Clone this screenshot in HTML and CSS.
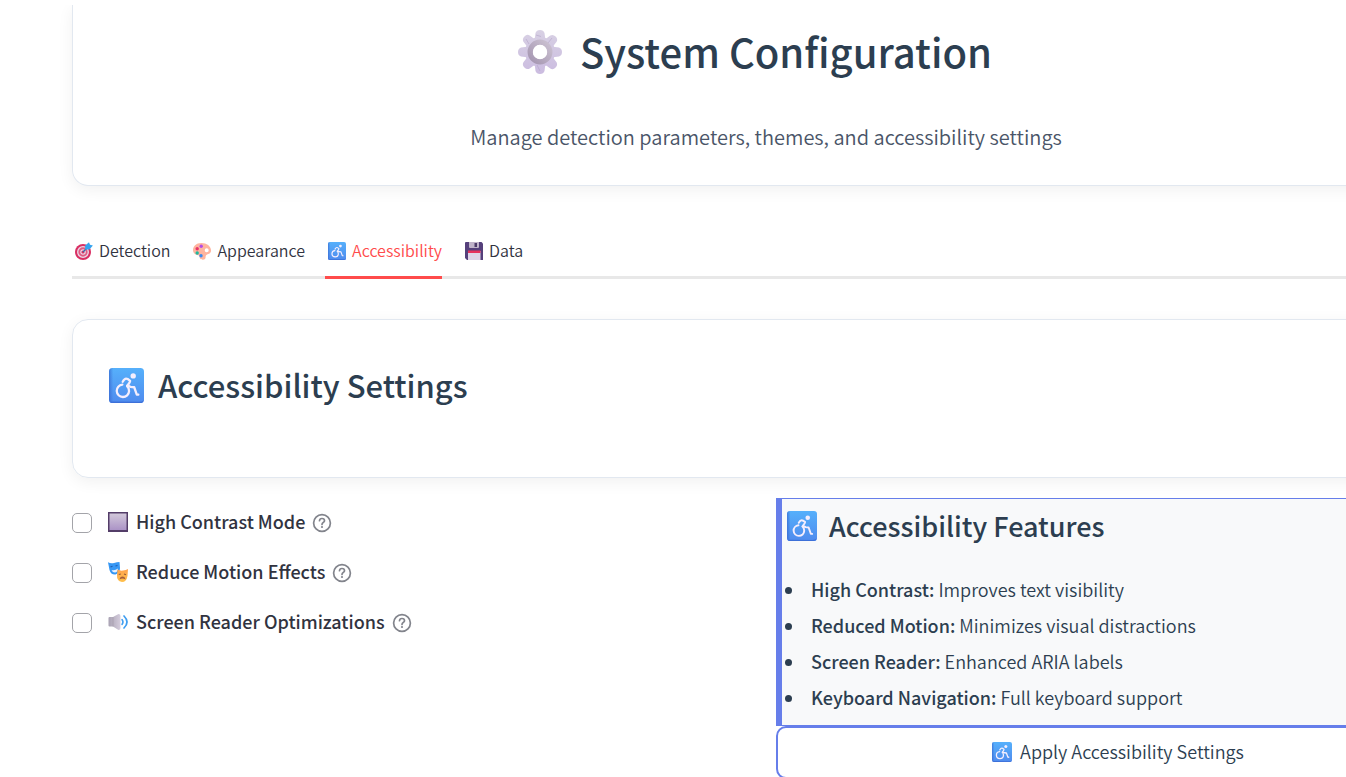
FILE: index.html
```html
<!DOCTYPE html>
<html lang="en">
<head>
<meta charset="utf-8">
<title>System Configuration</title>
<link rel="stylesheet" href="styles.css">
</head>
<body>
<svg class="defs" aria-hidden="true">
  <defs>
    <linearGradient id="blue" x1="0" y1="0" x2="0" y2="1"><stop offset="0" stop-color="#56b0fb"/><stop offset="1" stop-color="#4f8bee"/></linearGradient>
    <linearGradient id="blue-side" x1="0" y1="0" x2="1" y2="0"><stop offset="0" stop-color="#3566cf" stop-opacity=".7"/><stop offset="1" stop-color="#3566cf" stop-opacity="0"/></linearGradient>
    <linearGradient id="gear-fill" gradientUnits="userSpaceOnUse" x1="0" y1="0" x2="0" y2="44"><stop offset="0" stop-color="#d8d1e4"/><stop offset="1" stop-color="#cbbce0"/></linearGradient>
    <linearGradient id="hub" x1="1" y1="0" x2="0" y2="1"><stop offset="0" stop-color="#cbc1d1"/><stop offset="1" stop-color="#a596b1"/></linearGradient>
    <linearGradient id="square-fill" x1="0" y1="0" x2="0" y2="1"><stop offset="0" stop-color="#d2c8da"/><stop offset="1" stop-color="#ab93c6"/></linearGradient>
    <linearGradient id="orange" x1="0" y1="0" x2="0" y2="1"><stop offset="0" stop-color="#ffa24f"/><stop offset="1" stop-color="#ffc04a"/></linearGradient>
    <linearGradient id="cone" x1="0" y1="0" x2="1" y2="0"><stop offset="0" stop-color="#a9a2b3"/><stop offset="1" stop-color="#d5cddd"/></linearGradient>
    <symbol id="access" viewBox="0 0 34 34">
      <rect width="34" height="34" rx="3.500" fill="url(#blue)"/>
      <path d="M3.500 0H4v34H3.500A3.500 3.500 0 0 1 0 30.500V3.500A3.500 3.500 0 0 1 3.500 0Z" fill="url(#blue-side)"/>
      <path d="M1 32.500Q2 34 4 34H30Q33 34 34 31Q32 32.800 29 32.800Z" fill="#3d70d8"/>
      <circle cx="23.500" cy="7.700" r="2.600" fill="#f5eefd"/>
      <g fill="none" stroke="#f5eefd" stroke-width="2.200" stroke-linecap="round" stroke-linejoin="round">
        <path d="M13.300 13.400Q15 10.400 16.600 10.400T20.500 12.500Q20.700 13.500 17.600 17.300 19.600 17.300 21 18.300L24.500 18.700 27 25.800 28.500 25.900"/>
        <path d="M13 16.200A6 6 0 1 0 19.500 22.500Q19.500 19.500 17.600 17.600"/>
      </g>
    </symbol>
    <symbol id="gear" viewBox="0 0 44 44">
      <g fill="url(#gear-fill)">
        <circle cx="22" cy="22" r="15"/>
        <path d="M16.500 11 17.500 3Q18.500 0 22 0T26.500 3L27.500 11ZM16.500 33 17.500 41Q18.500 44 22 44T26.500 41L27.500 33Z"/>
        <path d="M11 16.500 3 17.500Q0 18.500 0 22T3 26.500L11 27.500ZM33 16.500 41 17.500Q44 18.500 44 22T41 26.500L33 27.500Z"/>
        <path d="M10.300 18.100 5.400 11.700Q4 8.900 6.400 6.400T11.700 5.400L18.100 10.300ZM33.700 25.900 38.600 32.300Q40 35.100 37.600 37.600T32.300 38.600L25.900 33.700Z"/>
        <path d="M25.900 10.300 32.300 5.400Q35.100 4 37.600 6.400T38.600 11.700L33.700 18.100ZM18.100 33.700 11.700 38.600Q8.900 40 6.400 37.600T5.400 32.300L10.300 25.900Z"/>
      </g>
      <path d="m18 5 5 1.500M34 8l-4 5M19 35l3 6M8 9l3 5" stroke="#b4a5c7" stroke-width=".6"/>
      <circle cx="22" cy="22" r="9.700" fill="#fff" stroke="url(#hub)" stroke-width="5.500"/>
      <circle cx="22" cy="22" r="7.200" fill="#fff"/>
    </symbol>
    <symbol id="target" viewBox="0 0 18 18">
      <circle cx="8" cy="10" r="8" fill="#d92f63"/>
      <circle cx="8" cy="10" r="5.300" fill="#e05b82" stroke="#ead9e8" stroke-width="1.300"/>
      <circle cx="8" cy="10" r="2.200" fill="#d7315f" stroke="#ead9e8" stroke-width="1.200"/>
      <path d="m8 10 5-5" stroke="#3868a8" stroke-width="1.300"/>
      <path d="m10 7.500.2-4L14 .3l1 2.400 2.900.9L14.500 7.500Z" fill="#35a4ef"/>
    </symbol>
    <symbol id="palette" viewBox="0 0 18 18">
      <path fill-rule="evenodd" d="M8.500 1C3 1 0 4.500 0 8s3 5 5.500 5.300C7 13.600 6 15 7 16.500S11 18 12 17c1.200-1.200 0-3 1.300-4S18 12 18 8.500C18 4 13.500 1 8.500 1Zm5.200 5.300a2 2 0 1 1 0 4 2 2 0 0 1 0-4Z" fill="#feb49f"/>
      <circle cx="8.200" cy="4.200" r="1.700" fill="#b34be8"/><circle cx="4.200" cy="6.700" r="1.700" fill="#e93468"/><circle cx="4.200" cy="11" r="1.700" fill="#20b9a0"/><circle cx="8" cy="13.800" r="1.700" fill="#398aef"/>
    </symbol>
    <symbol id="floppy" viewBox="0 0 18 18">
      <path d="M1 0H16.500L18 1.500V18H2L0 16V1Q0 0 1 0Z" fill="#55407b"/>
      <path d="M4 0H14V5Q14 6 13 6H5Q4 6 4 5Z" fill="#bfb3c9"/><path d="M9.500 1H12V5H9.500Z" fill="#4c3b68"/>
      <path d="M3 9H15.500V18H3Z" fill="#ded4e8"/><path d="M3 8.500H15.500V11H3Z" fill="#e6315e"/>
    </symbol>
    <symbol id="square" viewBox="0 0 20 20">
      <path d="M0 0H20V20H0Z" fill="#533d68"/><path d="M1.500 1.500H18.500V18H1.500Z" fill="url(#square-fill)"/>
    </symbol>
    <symbol id="masks" viewBox="0 0 20 20">
      <path d="M0 .3Q3 2 6 1T11.500 0L12 6Q12 11 7.500 12.500 3 13 1.500 8Z" fill="#3697f4"/>
      <path d="m2.500 5 2-.8M7.500 4l2-.5" stroke="#245cae" stroke-width="1.200"/><path d="M3.500 8Q7 9 10 6.500 9.500 10.500 7 10.500 4.500 10.500 3.500 8Z" fill="#e9f2ff"/>
      <path d="M9.500 7.500Q12 9 15 8.500T20 7L19.500 14Q18.500 20 14 20 8.500 19 9 13Z" fill="url(#orange)"/>
      <path d="m10.800 12.500 2-.5M16 12l2 .7" stroke="#965b35" stroke-width="1.200"/><path d="M11.500 17.500Q12 14.500 14.500 14.500T17.500 17.500Q14.500 15.500 11.500 17.500Z" fill="#a35b3c"/>
    </symbol>
    <symbol id="speaker" viewBox="0 0 20 20">
      <path d="M1.500 5H5L10.500 2Q12.500 2 12.500 4V16Q12.500 18 10.500 18L5 14.500H1.500Q.5 14.500 .5 13.500V6Q.5 5 1.500 5Z" fill="url(#cone)"/>
      <path d="M5 5V14.500" stroke="#a79faf" stroke-width=".8"/>
      <path d="M14 7.500Q16 10 14 12.500" fill="none" stroke="#3e9df0" stroke-width="1.500" stroke-linecap="round"/>
      <path d="M16 4Q22 10 16 16" fill="none" stroke="#3e9df0" stroke-width="1.700" stroke-linecap="round"/>
    </symbol>
    <symbol id="help" viewBox="0 0 20 20">
      <g fill="none" stroke="#82848c" stroke-width="1.700" stroke-linecap="round"><circle cx="10" cy="10" r="8.400"/><path d="M7.500 7.700C7.600 6.300 8.600 5.500 10 5.500s2.500.9 2.500 2.200C12.500 9.400 10 9.500 10 11.500"/></g><circle cx="10" cy="14" r="1.100" fill="#82848c"/>
    </symbol>
  </defs>
</svg>
<main class="viewport">
  <div class="content">
    <header class="hero">
      <h1 class="hero-title"><svg class="icon-hero" aria-hidden="true"><use href="#gear"/></svg>System Configuration</h1>
      <p class="hero-text">Manage detection parameters, themes, and accessibility settings</p>
    </header>
    <div class="tabs" role="tablist">
      <button class="tab" role="tab"><svg class="icon-tab" aria-hidden="true"><use href="#target"/></svg>Detection</button>
      <button class="tab" role="tab"><svg class="icon-tab" aria-hidden="true"><use href="#palette"/></svg>Appearance</button>
      <button class="tab tab-active" role="tab" aria-selected="true"><svg class="icon-tab" aria-hidden="true"><use href="#access"/></svg>Accessibility</button>
      <button class="tab" role="tab"><svg class="icon-tab" aria-hidden="true"><use href="#floppy"/></svg>Data</button>
    </div>
    <section class="card">
      <h2 class="card-title"><svg class="icon-card" aria-hidden="true"><use href="#access"/></svg>Accessibility Settings</h2>
    </section>
    <div class="columns">
      <div class="options">
        <div class="option">
          <input class="check" type="checkbox" id="contrast">
          <label class="option-label" for="contrast"><svg class="icon-option" aria-hidden="true"><use href="#square"/></svg>High Contrast Mode</label>
          <button class="help" aria-label="Help for High Contrast Mode"><svg class="icon-help" aria-hidden="true"><use href="#help"/></svg></button>
        </div>
        <div class="option">
          <input class="check" type="checkbox" id="motion">
          <label class="option-label" for="motion"><svg class="icon-option" aria-hidden="true"><use href="#masks"/></svg>Reduce Motion Effects</label>
          <button class="help" aria-label="Help for Reduce Motion Effects"><svg class="icon-help" aria-hidden="true"><use href="#help"/></svg></button>
        </div>
        <div class="option">
          <input class="check" type="checkbox" id="reader">
          <label class="option-label" for="reader"><svg class="icon-option" aria-hidden="true"><use href="#speaker"/></svg>Screen Reader Optimizations</label>
          <button class="help" aria-label="Help for Screen Reader Optimizations"><svg class="icon-help" aria-hidden="true"><use href="#help"/></svg></button>
        </div>
      </div>
      <div class="side">
        <section class="features">
          <h3 class="features-title"><svg class="icon-features" aria-hidden="true"><use href="#access"/></svg>Accessibility Features</h3>
          <ul class="features-list">
            <li><strong>High Contrast:</strong> Improves text visibility</li>
            <li><strong>Reduced Motion:</strong> Minimizes visual distractions</li>
            <li><strong>Screen Reader:</strong> Enhanced ARIA labels</li>
            <li><strong>Keyboard Navigation:</strong> Full keyboard support</li>
          </ul>
        </section>
        <button class="apply"><svg class="icon-option" aria-hidden="true"><use href="#access"/></svg>Apply Accessibility Settings</button>
      </div>
    </div>
  </div>
</main>
</body>
</html>
```
FILE: styles.css
```css
* { box-sizing: border-box; }
body {
  margin: 0;
  background: #fff;
  color: #31333f;
  font-family: "Noto Sans CJK SC", "Noto Sans", sans-serif;
  font-size: 18px;
  font-weight: 350;
}
h1, h2, h3, p, ul { margin: 0; }
button { font: inherit; color: inherit; background: none; border: 0; padding: 0; cursor: pointer; }
svg { flex: none; }
.defs { position: absolute; width: 0; height: 0; }
.viewport { margin-top: 5px; height: calc(100vh - 5px); overflow: hidden; }
.content { margin-left: 72px; margin-right: -114px; }

.hero {
  padding: 16px 36px 32px;
  border: 1px solid #e2e8f0;
  border-top: 0;
  border-radius: 0 0 16px 16px;
  box-shadow: 0 4px 16px rgba(0, 0, 0, 0.06);
  text-align: center;
}
.hero-title {
  display: flex; justify-content: center; align-items: center; gap: 18px;
  margin-bottom: 40px; padding-right: 22px;
  color: #2c3e50; font-size: 40px; line-height: 60px; font-weight: 500;
}
.hero-text { color: #4a5568; font-size: 20px; line-height: 32px; }

.tabs { display: flex; gap: 20px; margin-top: 40px; border-bottom: 3px solid #e8e8e8; }
.tab {
  display: flex; align-items: center; gap: 6px;
  height: 53px; margin-bottom: -3px; padding-left: 3px; padding-bottom: 2px;
  border-bottom: 3px solid transparent;
  font-size: 16px; line-height: 24px;
}
.tab-active { color: #ff4b4b; border-bottom-color: #ff4b4b; }

.card {
  margin-top: 40px; padding: 35px 36px 62px;
  border: 1px solid #e2e8f0; border-radius: 16px;
  box-shadow: 0 4px 16px rgba(0, 0, 0, 0.06);
}
.card-title {
  display: flex; align-items: center; gap: 14px;
  color: #2c3e50; font-size: 31px; line-height: 60px; font-weight: 500;
}

.columns { display: grid; grid-template-columns: 1fr 1fr; gap: 20px; margin-top: 20px; }
.options { display: flex; flex-direction: column; gap: 20px; padding-top: 10px; }
.option { display: flex; align-items: center; height: 30px; }
.check {
  appearance: none; width: 20px; height: 20px; margin: 0 16px 0 0;
  border: 1px solid #a3a4a9; border-radius: 5px; background: #fff;
}
.check:checked { background: #ff4b4b; }
.option-label { display: flex; align-items: center; gap: 8px; padding-bottom: 4px; font-weight: 500; line-height: 26px; }
.help { display: flex; margin-left: 7px; }

.features {
  padding-bottom: 10px;
  border: 1px solid #667eea; border-left-width: 6px;
  background: #f8f9fa; color: #2c3e50;
}
.features-title {
  display: flex; align-items: center; gap: 12px;
  padding-left: 5px; margin-bottom: 18px;
  font-size: 27px; line-height: 54px; font-weight: 500;
}
.features-list { padding-left: 3px; line-height: 36px; list-style: none; }
.features-list li { display: block; }
.features-list li::before {
  content: ""; display: inline-block; width: 7px; height: 7px;
  margin-right: 19px; vertical-align: 3px;
  border-radius: 50%; background: #2c3e50;
}
.features-list strong { font-weight: 500; }
.apply {
  display: flex; justify-content: center; align-items: center; gap: 8px;
  width: 100%; height: 53px; padding-bottom: 4px;
  border: 2px solid #667eea; border-radius: 10px;
  color: #2c3e50;
}

.icon-hero { width: 44px; height: 44px; margin-top: 2px; }
.icon-card { width: 35px; height: 35px; }
.icon-features { width: 30px; height: 30px; }
.icon-help { width: 20px; height: 20px; }
.icon-option { width: 20px; height: 20px; margin-top: 2px; }
.icon-tab { width: 18px; height: 18px; margin-top: 2px; }
```
